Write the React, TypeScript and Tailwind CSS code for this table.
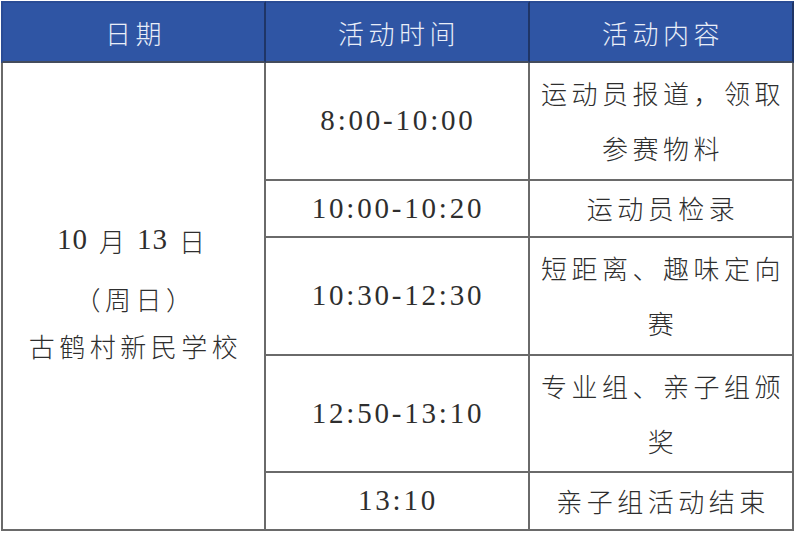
import React from "react"

const rows = [
  { time: "8:00-10:00", content: "运动员报道，领取参赛物料", h: "h-[118px]" },
  { time: "10:00-10:20", content: "运动员检录", h: "h-[57px]" },
  { time: "10:30-12:30", content: "短距离、趣味定向赛", h: "h-[118px]" },
  { time: "12:50-13:10", content: "专业组、亲子组颁奖", h: "h-[117px]" },
  { time: "13:10", content: "亲子组活动结束", h: "h-[58px]" },
]

const font = "font-['Liberation_Serif','Noto_Sans_CJK_SC',serif]"
const cjk = "font-['Noto_Sans_CJK_SC',sans-serif] font-light"

export default function App() {
  return (
    <div className="w-[800px] h-[535px] bg-white pl-[1px] pt-[1px]">
      <div className={`grid grid-cols-[265px_264px_264px] w-[795px] ${font} text-[#2e2e2e]`}>
        {/* header */}
        {["日期", "活动时间", "活动内容"].map((t, i) => (
          <div
            key={t}
            className={`h-[62px] bg-[#2f55a4] border-t-2 border-b-2 border-r-2 border-t-[#2a4c95] border-b-[#444c5c] border-r-[#1f3566] ${
              i === 0 ? "border-l-2 border-l-[#2a4c95]" : ""
            } flex items-center justify-center ${cjk} text-[26px] tracking-[4.5px] pl-[4px] text-[#e9eef8]`}
          >
            {t}
          </div>
        ))}

        {/* date column */}
        <div className="row-span-5 border-l-2 border-r-2 border-b-2 border-[#6a6a6a] flex flex-col items-center justify-start pt-[151px]">
          <div className="h-[52px] flex items-center text-[29px] tracking-[1px] pr-[4px]">
            <span>10</span>
            <span className={`${cjk} text-[26px] mx-[11px]`}>月</span>
            <span>13</span>
            <span className={`${cjk} text-[26px] ml-[11px]`}>日</span>
          </div>
          <div className={`h-[56px] flex items-center ${cjk} text-[26px] tracking-[4.5px] pl-[4px] mt-[4px]`}>
            （周日）
          </div>
          <div className={`h-[40px] flex items-center ${cjk} text-[26px] tracking-[4.5px] pl-[4px] -mt-[1px]`}>
            古鹤村新民学校
          </div>
        </div>

        {rows.map((r, i) => (
          <React.Fragment key={r.time}>
            <div
              className={`${r.h} ${i === 0 ? "col-start-2" : ""} border-r-2 border-b-2 border-[#6a6a6a] flex items-center justify-center text-[29px] tracking-[2.8px] pl-[2px]`}
            >
              {r.time}
            </div>
            <div
              className={`${r.h} border-r-2 border-b-2 border-[#6a6a6a] flex items-center justify-center px-0 ${cjk} text-[26px] leading-[55px] tracking-[4.5px] text-center`}
            >
              <span className="block w-[250px] pl-[4px] -mt-[2px]">{r.content}</span>
            </div>
          </React.Fragment>
        ))}
      </div>
    </div>
  )
}
